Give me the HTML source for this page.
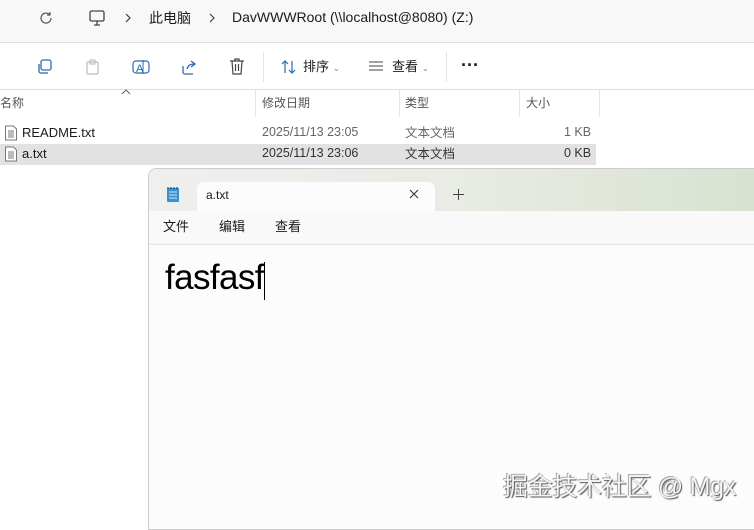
<!DOCTYPE html>
<html><head><meta charset="utf-8"><style>
body{margin:0;width:754px;height:520px;overflow:hidden;background:#fff;font-family:"Liberation Sans","Noto Sans CJK SC",sans-serif;position:relative;color:#1a1a1a}
.a{position:absolute;white-space:nowrap;line-height:1.2}
</style></head><body>
<div class="a" style="left:0;top:0;width:754px;height:42px;background:#f8f8f8;border-bottom:1px solid #ddd"></div>
<svg class="a" style="left:38px;top:10px" width="16" height="16" viewBox="0 0 16 16"><path d="M13 8a5 5 0 1 1-1.5-3.5M12 2v3h-3" fill="none" stroke="#555" stroke-width="1.2"/></svg>
<svg class="a" style="left:88px;top:9px" width="18" height="18" viewBox="0 0 18 18"><rect x="2" y="2" width="14" height="10" rx="1.5" fill="none" stroke="#444" stroke-width="1.3"/><path d="M6 16h6M9 12v4" stroke="#444" stroke-width="1.3"/></svg>
<svg class="a" style="left:124px;top:13px" width="8" height="10" viewBox="0 0 8 10"><path d="M2 1l4 4-4 4" fill="none" stroke="#444" stroke-width="1.2"/></svg>
<div class="a" style="left:149px;top:10px;font-size:14px">此电脑</div>
<svg class="a" style="left:208px;top:13px" width="8" height="10" viewBox="0 0 8 10"><path d="M2 1l4 4-4 4" fill="none" stroke="#444" stroke-width="1.2"/></svg>
<div class="a" style="left:232px;top:9px;font-size:14px">DavWWWRoot (\\localhost@8080) (Z:)</div>
<div class="a" style="left:0;top:43px;width:754px;height:46px;background:#fff;border-bottom:1px solid #ddd"></div>
<svg class="a" style="left:36px;top:58px" width="18" height="18" viewBox="0 0 18 18"><rect x="5" y="2" width="10" height="10" rx="2" fill="none" stroke="#2a6ab0" stroke-width="1.3"/><path d="M3 6v7a2 2 0 0 0 2 2h7" fill="none" stroke="#2a6ab0" stroke-width="1.3"/></svg>
<svg class="a" style="left:84px;top:58px" width="18" height="18" viewBox="0 0 18 18"><rect x="3" y="4" width="11" height="12" rx="1.5" fill="none" stroke="#bbb" stroke-width="1.2"/><rect x="6" y="2" width="5" height="4" fill="none" stroke="#bbb"/></svg>
<svg class="a" style="left:131px;top:57px" width="20" height="20" viewBox="0 0 20 20"><rect x="2" y="4" width="16" height="12" rx="3" fill="none" stroke="#2a6ab0" stroke-width="1.2"/><text x="5" y="15" font-size="11" fill="#2a6ab0" font-family="Liberation Sans">A</text><path d="M12 3v14" stroke="#2a6ab0"/></svg>
<svg class="a" style="left:180px;top:58px" width="18" height="18" viewBox="0 0 18 18"><path d="M3 8v6a2 2 0 0 0 2 2h8M7 11c1-4 4-5 7-5M11 3l4 3-4 3" fill="none" stroke="#2a6ab0" stroke-width="1.3"/></svg>
<svg class="a" style="left:228px;top:57px" width="18" height="19" viewBox="0 0 18 19"><path d="M2 4h14M7 4V2h4v2M4 4l1 13h8l1-13M7.5 7v7M10.5 7v7" fill="none" stroke="#444" stroke-width="1.2"/></svg>
<div class="a" style="left:263px;top:52px;width:1px;height:30px;background:#e3e3e3"></div>
<svg class="a" style="left:280px;top:59px" width="18" height="16" viewBox="0 0 18 16"><path d="M5 14V2M2 5l3-3 3 3M12 2v12M9 11l3 3 3-3" fill="none" stroke="#2a6ab0" stroke-width="1.2"/></svg>
<div class="a" style="left:303px;top:59px;font-size:13px">排序 <span style="font-size:9px;color:#888">⌄</span></div>
<svg class="a" style="left:368px;top:60px" width="16" height="14" viewBox="0 0 16 14"><path d="M1 2h14M1 6h14M1 10h14" stroke="#444" stroke-width="1.1"/></svg>
<div class="a" style="left:392px;top:59px;font-size:13px">查看 <span style="font-size:9px;color:#888">⌄</span></div>
<div class="a" style="left:446px;top:52px;width:1px;height:30px;background:#e3e3e3"></div>
<div class="a" style="left:461px;top:55px;font-size:18px;font-weight:bold">···</div>
<svg class="a" style="left:121px;top:89px" width="10" height="6" viewBox="0 0 10 6"><path d="M1 5l4-4 4 4" fill="none" stroke="#666"/></svg>
<div class="a" style="left:0;top:96px;font-size:12px;color:#555">名称</div>
<div class="a" style="left:255px;top:90px;width:1px;height:27px;background:#e5e5e5"></div>
<div class="a" style="left:262px;top:96px;font-size:12px;color:#555">修改日期</div>
<div class="a" style="left:399px;top:90px;width:1px;height:27px;background:#e5e5e5"></div>
<div class="a" style="left:405px;top:96px;font-size:12px;color:#555">类型</div>
<div class="a" style="left:519px;top:90px;width:1px;height:27px;background:#e5e5e5"></div>
<div class="a" style="left:526px;top:96px;font-size:12px;color:#555">大小</div>
<div class="a" style="left:599px;top:90px;width:1px;height:27px;background:#e5e5e5"></div>
<div class="a" style="left:0;top:144px;width:596px;height:21px;background:#e2e2e2"></div>
<svg class="a" style="left:4px;top:125px" width="14" height="16" viewBox="0 0 14 16"><path d="M1.5 1h8l3 3v11h-11z M4 6h6M4 8h6M4 10h6M4 12h6" fill="#fff" stroke="#777"/></svg>
<div class="a" style="left:22px;top:125px;font-size:13px">README.txt</div>
<div class="a" style="left:262px;top:125px;font-size:12.5px;color:#666">2025/11/13 23:05</div>
<div class="a" style="left:405px;top:126px;font-size:12.5px;color:#666">文本文档</div>
<div class="a" style="left:564px;top:125px;font-size:12.5px;color:#666">1 KB</div>
<svg class="a" style="left:4px;top:146px" width="14" height="16" viewBox="0 0 14 16"><path d="M1.5 1h8l3 3v11h-11z M4 6h6M4 8h6M4 10h6M4 12h6" fill="#fff" stroke="#777"/></svg>
<div class="a" style="left:22px;top:146px;font-size:13px">a.txt</div>
<div class="a" style="left:262px;top:146px;font-size:12.5px;color:#333">2025/11/13 23:06</div>
<div class="a" style="left:405px;top:147px;font-size:12.5px;color:#333">文本文档</div>
<div class="a" style="left:564px;top:146px;font-size:12.5px;color:#333">0 KB</div>

<div class="a" style="left:148px;top:168px;width:610px;height:360px;border:1px solid #ccc;border-radius:8px 0 0 0;background:#fcfcfc;overflow:hidden">
 <div class="a" style="left:0;top:0;width:610px;height:42px;background:linear-gradient(90deg,#efefed,#e8ece4 50%,#d8e2d0)"></div>
 <svg class="a" style="left:17px;top:17px" width="14" height="17" viewBox="0 0 14 17"><rect x="1" y="2" width="12" height="14" rx="1" fill="#3a8fd0"/><path d="M3 6h8M3 9h8M3 12h8" stroke="#cfe6f7"/><path d="M2 1v2M5 1v2M8 1v2M11 1v2" stroke="#234"/></svg>
 <div class="a" style="left:48px;top:13px;width:238px;height:30px;background:#fcfcfc;border-radius:7px 7px 0 0"></div>
 <div class="a" style="left:57px;top:19px;font-size:12px">a.txt</div>
 <svg class="a" style="left:260px;top:20px" width="10" height="10" viewBox="0 0 10 10"><path d="M1 1l8 8M9 1l-8 8" stroke="#333" stroke-width="1.1"/></svg>
 <svg class="a" style="left:304px;top:20px" width="11" height="11" viewBox="0 0 11 11"><path d="M5.5 0v11M0 5.5h11" stroke="#444" stroke-width="1"/></svg>
 <div class="a" style="left:0;top:42px;width:610px;height:33px;background:#f9f9f9;border-bottom:1px solid #e5e5e5"></div>
 <div class="a" style="left:14px;top:50px;font-size:13px">文件</div>
 <div class="a" style="left:70px;top:50px;font-size:13px">编辑</div>
 <div class="a" style="left:126px;top:50px;font-size:13px">查看</div>
 <div class="a" style="left:16px;top:88px;font-size:35px;color:#000;letter-spacing:-0.6px">fasfasf</div>
 <div class="a" style="left:115px;top:93px;width:1px;height:38px;background:#000"></div>
</div>
<div class="a" style="left:503px;top:472px;font-size:25px;letter-spacing:-0.3px;color:#f4f4f4;text-shadow:1px 1px 1px #555,-1px -1px 0 #aaa">掘金技术社区 @ Mgx</div>
</body></html>
